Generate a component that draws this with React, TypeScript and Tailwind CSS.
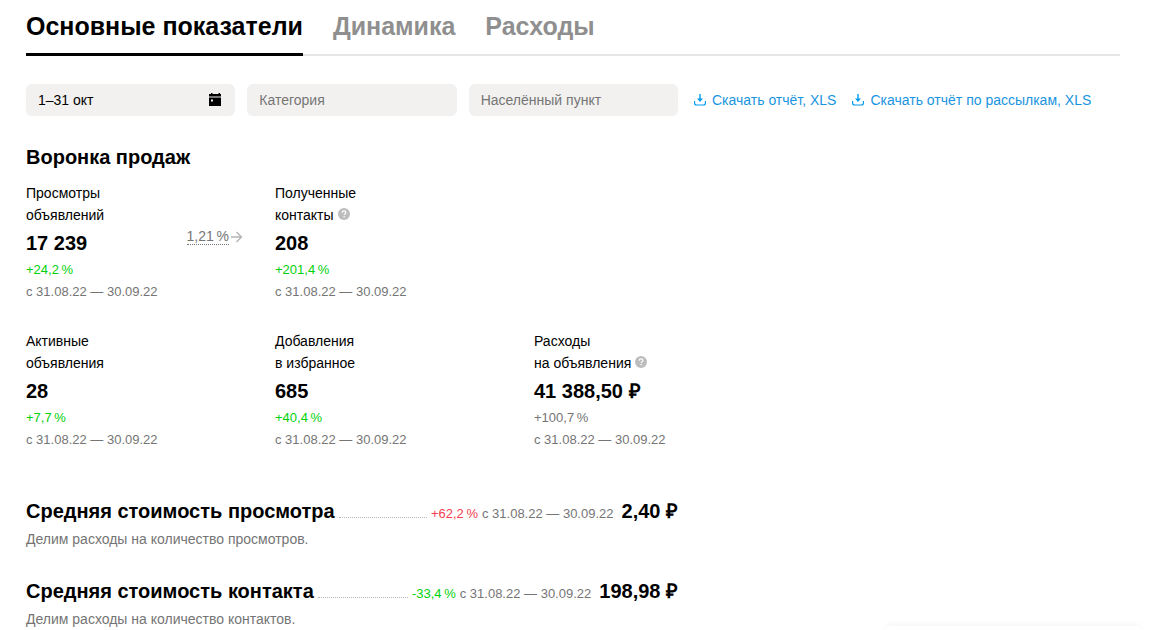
import { useState } from "react";

interface Metric {
  id: string;
  label: [string, string];
  value: string;
  change: string;
  changeColor: string;
  hint?: boolean;
  conversion?: string;
}

interface CostMetric {
  id: string;
  title: string;
  description: string;
  change: string;
  changeColor: string;
  value: string;
}

const PERIOD = "с 31.08.22 — 30.09.22";

const tabs = ["Основные показатели", "Динамика", "Расходы"];

const funnel: Metric[] = [
  {
    id: "views",
    label: ["Просмотры", "объявлений"],
    value: "17 239",
    change: "+24,2\u2009%",
    changeColor: "text-[#02d10a]",
    conversion: "1,21\u2009%",
  },
  {
    id: "contacts",
    label: ["Полученные", "контакты"],
    value: "208",
    change: "+201,4\u2009%",
    changeColor: "text-[#02d10a]",
    hint: true,
  },
];

const activity: Metric[] = [
  {
    id: "active",
    label: ["Активные", "объявления"],
    value: "28",
    change: "+7,7\u2009%",
    changeColor: "text-[#02d10a]",
  },
  {
    id: "favorites",
    label: ["Добавления", "в избранное"],
    value: "685",
    change: "+40,4\u2009%",
    changeColor: "text-[#02d10a]",
  },
  {
    id: "expenses",
    label: ["Расходы", "на объявления"],
    value: "41 388,50 ₽",
    change: "+100,7\u2009%",
    changeColor: "text-[#757575]",
    hint: true,
  },
];

const costs: CostMetric[] = [
  {
    id: "view-cost",
    title: "Средняя стоимость просмотра",
    description: "Делим расходы на количество просмотров.",
    change: "+62,2\u2009%",
    changeColor: "text-[#f0404f]",
    value: "2,40 ₽",
  },
  {
    id: "contact-cost",
    title: "Средняя стоимость контакта",
    description: "Делим расходы на количество контактов.",
    change: "-33,4\u2009%",
    changeColor: "text-[#02d10a]",
    value: "198,98 ₽",
  },
];

function CalendarIcon() {
  return (
    <svg width="14" height="14" viewBox="0 0 14 14" fill="none" aria-hidden="true">
      <path d="M2 0h1.500v1h6V0H11v1h1v2.500H0V1h2V0Z" fill="#000" />
      <path fillRule="evenodd" d="M0 4.500h12v8.500H0V4.500Zm2 2v2h2v-2H2Z" fill="#000" />
    </svg>
  );
}

function DownloadIcon() {
  return (
    <svg width="12" height="12" viewBox="0 0 12 12" fill="none" aria-hidden="true">
      <path d="M6 0v6" stroke="#009cf0" strokeWidth="1.4" />
      <path d="M3 4.500h6L6 8Z" fill="#009cf0" />
      <path
        d="M.6 7v2c0 1.300.8 2 2 2h6.800c1.200 0 2-.7 2-2V7"
        stroke="#009cf0"
        strokeWidth="1.2"
      />
    </svg>
  );
}

function ArrowIcon() {
  return (
    <svg width="12" height="12" viewBox="0 0 12 12" fill="none" aria-hidden="true">
      <path d="M0 6h10.500M5.500 1l5 5-5 5" stroke="#b5b5b5" strokeWidth="1.4" />
    </svg>
  );
}

function HintButton() {
  return (
    <button type="button" aria-label="Подсказка" className="align-middle">
      <svg width="12" height="12" viewBox="0 0 12 12" fill="none" className="mb-1 block">
        <circle cx="6" cy="6" r="6" fill="#bdbdbd" />
        <path
          d="M4.200 4.700c0-1.100.8-1.800 1.900-1.800s1.800.7 1.800 1.600c0 1.200-1.700 1.300-1.700 2.600"
          stroke="#fff"
          strokeWidth="1.200"
        />
        <path d="M5.500 8h1.300v1.300H5.500z" fill="#fff" />
      </svg>
    </button>
  );
}

function MetricCell({ metric }: { metric: Metric }) {
  return (
    <div className="flex items-center justify-between pr-8">
      <div>
        <h3 className="mb-px text-sm leading-[22px]">
          {metric.label[0]}
          <br />
          {metric.label[1]}
          {metric.hint && <> <HintButton /></>}
        </h3>
        <p className="text-xl leading-8 font-bold whitespace-nowrap">{metric.value}</p>
        <p className={`text-[13px] leading-[22px] ${metric.changeColor}`}>{metric.change}</p>
        <p className="text-[13px] leading-[22px] whitespace-nowrap text-[#757575]">{PERIOD}</p>
      </div>
      {metric.conversion && (
        <div className="mb-3 flex items-center gap-[2px] text-sm leading-4 text-[#757575]">
          <span className="border-b border-dotted border-[#757575]">{metric.conversion}</span>
          <ArrowIcon />
        </div>
      )}
    </div>
  );
}

function CostRow({ cost }: { cost: CostMetric }) {
  return (
    <div>
      <div className="flex items-baseline">
        <h2 className="text-xl leading-8 font-bold whitespace-nowrap">{cost.title}</h2>
        <span className="mx-1 flex-1 border-b border-dotted border-[#b5b5b5]" />
        <span className={`text-[13px] leading-[22px] whitespace-nowrap ${cost.changeColor}`}>{cost.change}</span>
        <span className="ml-1 text-[13px] leading-[22px] whitespace-nowrap text-[#757575]">{PERIOD}</span>
        <span className="ml-2 text-xl leading-8 font-bold whitespace-nowrap">{cost.value}</span>
      </div>
      <p className="text-sm leading-6 text-[#757575]">{cost.description}</p>
    </div>
  );
}

export default function App() {
  const [activeTab, setActiveTab] = useState(tabs[0]);
  const [category, setCategory] = useState("");
  const [city, setCity] = useState("");

  return (
    <div className="min-h-screen overflow-hidden bg-white pr-9 pl-[26px] font-['Liberation_Sans',Arial,sans-serif] text-black">
      {/* Tabs */}
      <nav className="flex gap-[30px] shadow-[inset_0_-2px_0_#e5e5e5]">
        {tabs.map((tab) => (
          <button
            key={tab}
            type="button"
            onClick={() => setActiveTab(tab)}
            className={`border-b-[3px] pt-2 pb-[9px] text-[25px] leading-9 font-bold whitespace-nowrap ${
              activeTab === tab ? "border-black text-black" : "border-transparent text-[#8f8f8f]"
            }`}
          >
            {tab}
          </button>
        ))}
      </nav>

      {/* Filters */}
      <div className="mt-7 flex items-center gap-4">
        <div className="grid w-[652px] grid-cols-3 gap-3">
          <button
            type="button"
            className="flex h-8 items-center justify-between rounded-md bg-[#f2f1f0] px-3 text-sm"
          >
            1–31 окт
            <CalendarIcon />
          </button>
          <input
            type="text"
            aria-label="Категория"
            placeholder="Категория"
            value={category}
            onChange={(e) => setCategory(e.target.value)}
            className="h-8 w-full rounded-md bg-[#f2f1f0] px-3 text-sm placeholder:text-[#757575]"
          />
          <input
            type="text"
            aria-label="Населённый пункт"
            placeholder="Населённый пункт"
            value={city}
            onChange={(e) => setCity(e.target.value)}
            className="h-8 w-full rounded-md bg-[#f2f1f0] px-3 text-sm placeholder:text-[#757575]"
          />
        </div>
        <a href="#report" className="flex items-center gap-[6px] text-sm whitespace-nowrap text-[#1a94de]">
          <DownloadIcon />
          Скачать отчёт, XLS
        </a>
        <a href="#mailing-report" className="flex items-center gap-[6px] text-sm whitespace-nowrap text-[#1a94de]">
          <DownloadIcon />
          Скачать отчёт по рассылкам, XLS
        </a>
      </div>

      {/* Sales funnel */}
      <section className="mt-[25px]">
        <h2 className="text-xl leading-8 font-bold">Воронка продаж</h2>
        <div className="mt-[9px] grid grid-cols-[249px_259px_1fr]">
          {funnel.map((metric) => (
            <MetricCell key={metric.id} metric={metric} />
          ))}
        </div>
        <div className="mt-[27px] grid grid-cols-[249px_259px_1fr]">
          {activity.map((metric) => (
            <MetricCell key={metric.id} metric={metric} />
          ))}
        </div>
      </section>

      {/* Average costs */}
      <section className="mt-11 flex max-w-[652px] flex-col gap-6">
        {costs.map((cost) => (
          <CostRow key={cost.id} cost={cost} />
        ))}
      </section>

      {/* Collapsed chat panel */}
      <div className="fixed right-4 bottom-0 h-1 w-[254px] rounded-t-lg bg-white shadow-[0_0_6px_rgba(0,0,0,0.08)]" />
    </div>
  );
}
